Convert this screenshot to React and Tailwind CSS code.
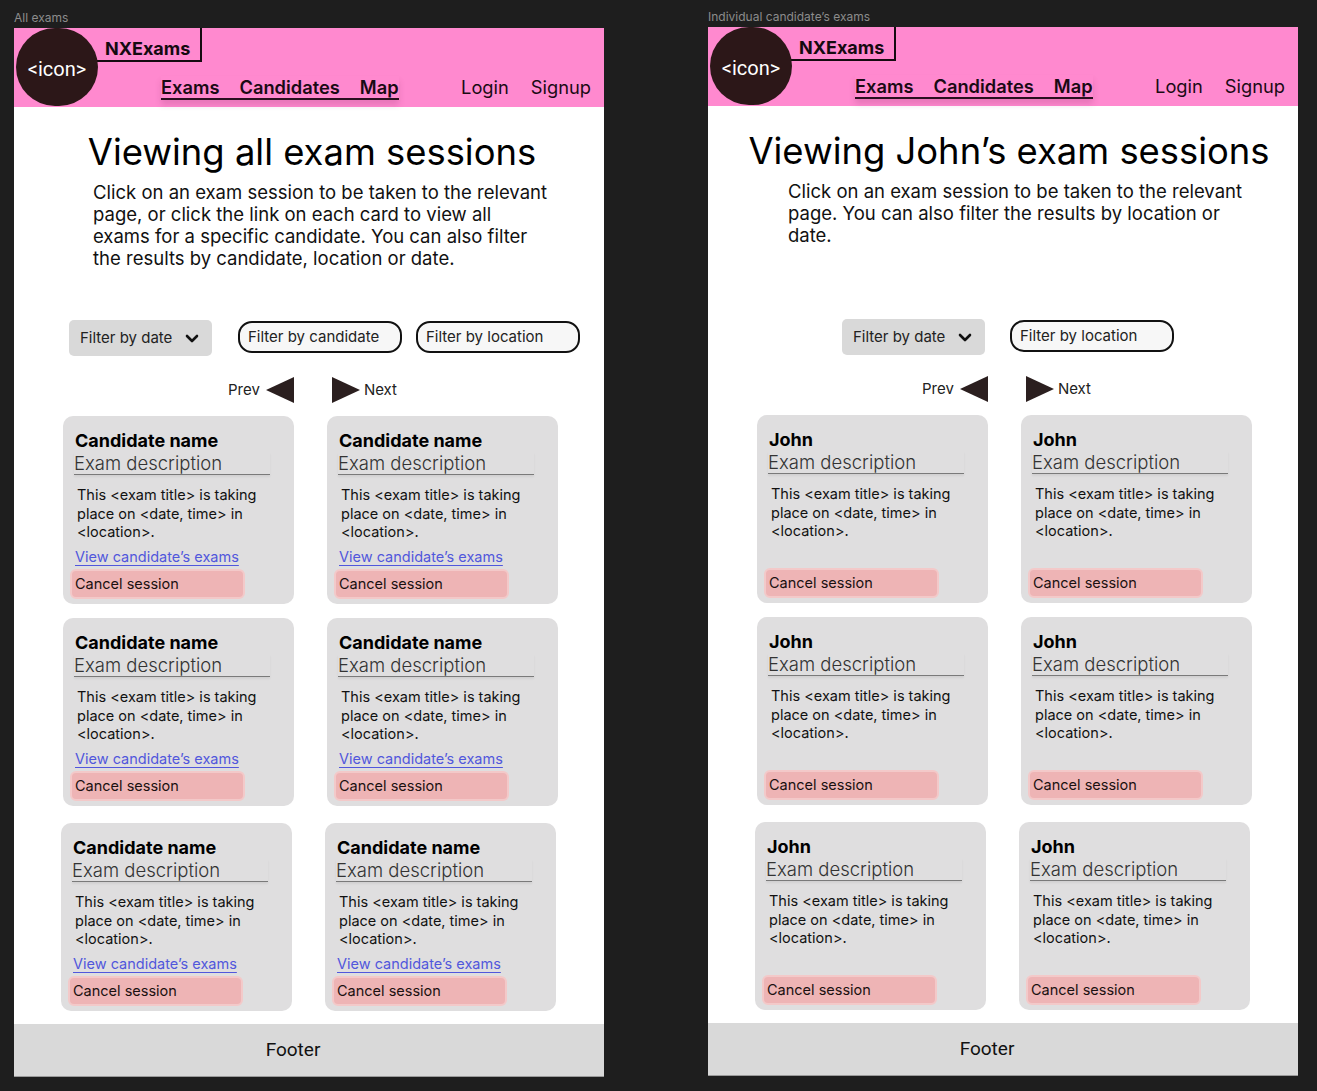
import React from 'react';

const Triangle = ({ dir }) => (
    <svg width="28" height="26" viewBox="0 0 28 26">
        {dir === 'left' ? (
            <polygon points="28,0 0,13 28,26" fill="#2b1f1f" />
        ) : (
            <polygon points="0,0 28,13 0,26" fill="#2b1f1f" />
        )}
    </svg>
);

const Chevron = () => (
    <svg width="14" height="9" viewBox="0 0 14 9">
        <path d="M2 2 L7 7 L12 2" fill="none" stroke="#111" strokeWidth="2.6" strokeLinecap="round" strokeLinejoin="round" />
    </svg>
);

const Header = () => (
    <div className="h-[79px] bg-[#ff89cf] flex items-start">
        <div className="ml-[2px] w-[82px] h-[78px] shrink-0 rounded-full bg-[#2c1718] relative z-10 flex items-center justify-center">
            <span className="text-white text-[20px] font-['Roboto',sans-serif] leading-none mt-[3px]">&lt;icon&gt;</span>
        </div>
        <div className="flex-1 flex flex-col">
            <div className="self-start -ml-[19px] h-[34px] pt-[8px] pl-[26px] pr-[10px] border-r-2 border-b-2 border-[#150a10] flex items-center font-bold text-[18px] text-[#150a10]">
                NXExams
            </div>
            <div className="mt-[14px] ml-[63px] mr-[13px] flex justify-between items-start text-[18.3px] text-[#1a0a14] leading-[22px]">
                <div className="flex gap-[20px] font-semibold border-b-2 border-[#2a0f1f] shadow-[0_5px_6px_rgba(120,40,90,0.18)]">
                    <span>Exams</span>
                    <span>Candidates</span>
                    <span>Map</span>
                </div>
                <div className="flex gap-[22px]">
                    <span>Login</span>
                    <span>Signup</span>
                </div>
            </div>
        </div>
    </div>
);

const Card = ({ name, link }) => (
    <div className="w-[231px] h-[188px] rounded-[10px] bg-[#dfdedf] flex flex-col pt-[14px] pl-[12px] pb-[5px]">
        <div className="text-[18px] font-bold leading-[22px] text-black">{name}</div>
        <div className="w-[196px] -ml-[1px] text-[18.5px] font-light leading-[22px] text-[#333] border-b-[1.5px] border-[#7a7a7a] shadow-[0_2px_2px_rgba(0,0,0,0.06)]">
            Exam description
        </div>
        <div className="mt-[11px] ml-[2px] text-[14.5px] leading-[18.5px] text-[#111]">
            This &lt;exam title&gt; is taking<br />place on &lt;date, time&gt; in<br />&lt;location&gt;.
        </div>
        {link && (
            <div className="mt-[6px] text-[14.5px] leading-[18px] text-[#5157dc] underline underline-offset-[3px] decoration-[#5157dc]">
                View candidate’s exams
            </div>
        )}
        <div className="mt-auto -ml-[5px] w-[175px] h-[30px] rounded-[6px] bg-[#eeb4b5] border-2 border-[#f3c9c9] flex items-center pl-[3px] text-[14.5px] text-[#1a1010]">
            Cancel session
        </div>
    </div>
);

const Frame = ({ title, lines, name, link, candidateFilter, padLeft, rowLeft, titleShift }) => (
    <div className="w-[590px] h-[1049px] bg-white flex flex-col font-['Inter',sans-serif] text-black">
        <Header />
        <div className="h-[213px] flex flex-col">
            <h1 className={`mt-[23px] text-[36.4px] leading-[44px] font-normal text-center whitespace-nowrap ${titleShift}`}>{title}</h1>
            <p className={`mt-[7px] text-[18.5px] leading-[22px] text-[#111] whitespace-nowrap ${padLeft}`}>
                {lines.map((l, i) => (
                    <React.Fragment key={i}>
                        {l}
                        {i < lines.length - 1 && <br />}
                    </React.Fragment>
                ))}
            </p>
        </div>
        <div className={`h-[36px] flex items-start text-[15px] text-[#222] ${rowLeft}`}>
            <div className="w-[143px] h-[36px] rounded-[5px] bg-[#d9d9d9] flex items-center pl-[11px] gap-[13px]">
                <span>Filter by date</span>
                <Chevron />
            </div>
            {candidateFilter && (
                <div className="ml-[26px] mt-[1px] w-[164px] h-[32px] rounded-[14px] border-2 border-[#111] bg-[#f7f7f7] flex items-center pl-[8px]">
                    Filter by candidate
                </div>
            )}
            <div className={`${candidateFilter ? 'ml-[14px]' : 'ml-[25px]'} mt-[1px] w-[164px] h-[32px] rounded-[14px] border-2 border-[#111] bg-[#f7f7f7] flex items-center pl-[8px]`}>
                Filter by location
            </div>
        </div>
        <div className="mt-[21px] h-[26px] ml-[214px] flex items-center text-[15px] text-[#222]">
            <span>Prev</span>
            <span className="ml-[6px] flex"><Triangle dir="left" /></span>
            <span className="ml-[38px] flex"><Triangle dir="right" /></span>
            <span className="ml-[4px]">Next</span>
        </div>
        <div className="mt-[13px] ml-[49px] flex flex-col">
            <div className="flex gap-[33px]">
                <Card name={name} link={link} />
                <Card name={name} link={link} />
            </div>
            <div className="mt-[14px] flex gap-[33px]">
                <Card name={name} link={link} />
                <Card name={name} link={link} />
            </div>
            <div className="mt-[17px] -ml-[2px] flex gap-[33px]">
                <Card name={name} link={link} />
                <Card name={name} link={link} />
            </div>
        </div>
        <div className="mt-auto h-[53px] pr-[32px] bg-[#d9d9d9] border-b border-[#9a9a9a] flex items-center justify-center text-[19px] text-[#111] font-['Roboto',sans-serif]">
            Footer
        </div>
    </div>
);

export default function App() {
    return (
        <div className="w-[1317px] h-[1091px] bg-[#1e1e1e] flex items-start font-['Inter',sans-serif] overflow-hidden">
            <div className="ml-[14px] flex flex-col">
                <div className="h-[28px] pt-[10px] text-[12px] leading-[16px] text-[#8c8c8c]">All exams</div>
                <Frame
                    title="Viewing all exam sessions"
                    lines={[
                        'Click on an exam session to be taken to the relevant',
                        'page, or click the link on each card to view all',
                        'exams for a specific candidate. You can also filter',
                        'the results by candidate, location or date.',
                    ]}
                    name="Candidate name"
                    link
                    candidateFilter
                    padLeft="pl-[79px]"
                    rowLeft="pl-[55px]"
                    titleShift="pl-[6px]"
                />
            </div>
            <div className="ml-[104px] flex flex-col">
                <div className="h-[27px] pt-[9px] text-[12px] leading-[16px] text-[#8c8c8c]">Individual candidate’s exams</div>
                <Frame
                    title="Viewing John’s exam sessions"
                    lines={[
                        'Click on an exam session to be taken to the relevant',
                        'page. You can also filter the results by location or',
                        'date.',
                    ]}
                    name="John"
                    link={false}
                    candidateFilter={false}
                    padLeft="pl-[80px]"
                    rowLeft="pl-[134px]"
                    titleShift="pl-[12px]"
                />
            </div>
        </div>
    );
}
